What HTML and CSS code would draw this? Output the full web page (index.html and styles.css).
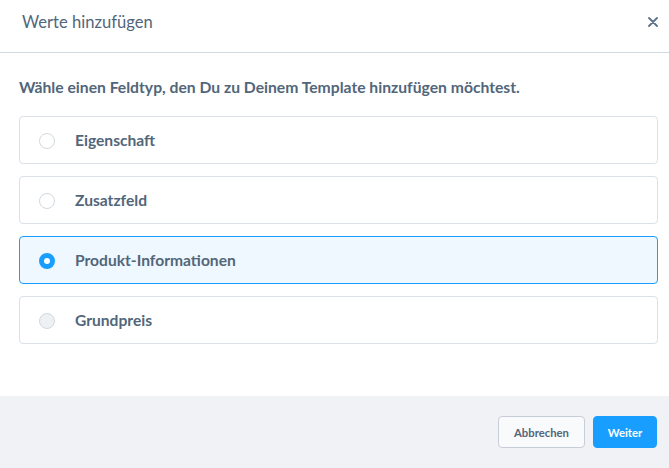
FILE: index.html
```html
<!DOCTYPE html>
<html lang="de">
<head>
<meta charset="utf-8">
<title>Werte hinzufügen</title>
<link rel="stylesheet" href="styles.css">
</head>
<body>
<div class="modal">
  <header class="modal-header">
    <h2 class="modal-title">Werte hinzufügen</h2>
    <button class="close" aria-label="Schließen">
      <svg width="10" height="10" viewBox="0 0 10 10"><path d="M1 1L9 9M9 1L1 9" stroke="#5d7289" stroke-width="1.8" stroke-linecap="round"/></svg>
    </button>
  </header>
  <div class="modal-body">
    <p class="lead">Wähle einen Feldtyp, den Du zu Deinem Template hinzufügen möchtest.</p>
    <div class="options">
      <label class="option"><span class="radio"></span><span class="label">Eigenschaft</span></label>
      <label class="option"><span class="radio"></span><span class="label">Zusatzfeld</span></label>
      <label class="option selected"><span class="radio"></span><span class="label">Produkt-Informationen</span></label>
      <label class="option"><span class="radio disabled"></span><span class="label">Grundpreis</span></label>
    </div>
  </div>
  <footer class="modal-footer">
    <button class="btn btn-secondary">Abbrechen</button>
    <button class="btn btn-primary">Weiter</button>
  </footer>
</div>
</body>
</html>
```
FILE: styles.css
```css
* { box-sizing: border-box; }
html, body { margin: 0; padding: 0; }
body {
  width: 669px;
  height: 468px;
  background: #fff;
  font-family: Lato, "Noto Sans", sans-serif;
  color: #52667a;
  overflow: hidden;
}
.modal {
  display: flex;
  flex-direction: column;
  height: 468px;
}
.modal-header {
  height: 53px;
  border-bottom: 1px solid #d1d9e0;
  display: flex;
  align-items: center;
  justify-content: space-between;
  padding: 0 9px 0 22px;
}
.modal-title {
  margin: 0;
  font-size: 16.6px;
  font-weight: 400;
  color: #52667a;
  padding-bottom: 8px;
}
.close {
  border: 0;
  background: none;
  padding: 0;
  width: 14px;
  height: 14px;
  display: flex;
  align-items: center;
  justify-content: center;
  margin-bottom: 8px;
}
.modal-body {
  flex: 1;
  padding: 24px 11px 0 19px;
}
.lead {
  margin: 0 0 19px;
  font-size: 15.7px;
  font-weight: 700;
  color: #52667a;
  line-height: 20px;
}
.options {
  display: flex;
  flex-direction: column;
  gap: 12px;
}
.option {
  height: 48px;
  border: 1px solid #dbe1e7;
  border-radius: 4px;
  display: flex;
  align-items: center;
  padding-left: 19px;
}
.option.selected {
  background: #f0f8ff;
  border-color: #189eff;
}
.radio {
  flex: none;
  width: 16px;
  height: 16px;
  border: 1px solid #d1d9e0;
  border-radius: 50%;
  background: #fff;
  margin-right: 20px;
  margin-top: 2px;
}
.radio.disabled { background: #eef0f4; }
.selected .radio {
  border: 5px solid #189eff;
  background: #fff;
}
.label {
  font-size: 15.6px;
  font-weight: 700;
  color: #52667a;
}
.modal-footer {
  height: 72px;
  background: #f0f2f5;
  display: flex;
  justify-content: flex-end;
  align-items: center;
  gap: 8px;
  padding: 0 12px 0 0;
}
.btn {
  height: 32px;
  border-radius: 4px;
  font-family: inherit;
  font-size: 11.3px;
  font-weight: 700;
  cursor: pointer;
}
.btn-secondary {
  width: 87px;
  background: #f9fafb;
  border: 1px solid #c6cfd8;
  color: #52667a;
}
.btn-primary {
  width: 64px;
  background: #189eff;
  border: 1px solid #189eff;
  color: #fff;
}
```
